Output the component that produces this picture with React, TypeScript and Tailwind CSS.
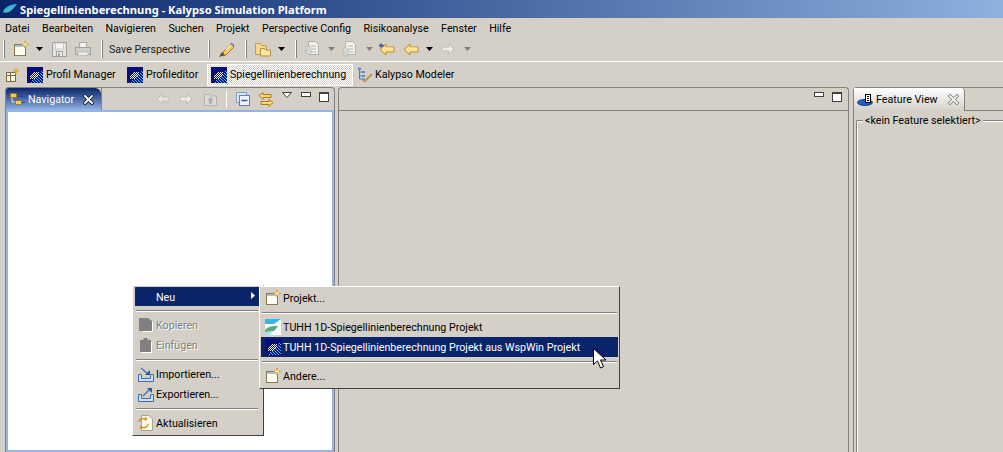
import React from "react";

const font = "font-['Roboto',sans-serif] text-[10.7px] leading-[13px]";

function Grip() {
  return <span className="block w-[2px] h-[18px] bg-white border-r border-[#808080]" />;
}

function Arrow({ off }: { off?: boolean }) {
  return (
    <svg width="7" height="4" viewBox="0 0 7 4" className="block">
      <path d="M0 0h7L3.500 4z" fill={off ? "#808080" : "#000"} />
    </svg>
  );
}

function NewIcon() {
  return (
    <svg width="16" height="16" viewBox="0 0 16 16" className="block shrink-0">
      <rect x="1.500" y="3.500" width="11" height="11" fill="#fffdf0" stroke="#8a7a50" />
      <rect x="2" y="4" width="10" height="2" fill="#a8c0e0" />
      <path d="M12 0v7M8.500 3.500h7" stroke="#d89c18" strokeWidth="1.600" />
      <path d="M12 1.500v4M10 3.500h4" stroke="#fff4b0" />
    </svg>
  );
}

function SaveIcon() {
  return (
    <svg width="15" height="15" viewBox="0 0 15 15" className="block">
      <rect x="0.500" y="0.500" width="14" height="14" fill="#e2e2de" stroke="#a0a09c" />
      <rect x="3.500" y="1" width="8" height="6" fill="#f6f6f4" stroke="#b4b4b0" strokeWidth="0.600" />
      <rect x="4.500" y="9.500" width="6" height="5" fill="#f0f0ec" stroke="#a0a09c" />
      <rect x="6" y="11" width="2" height="3" fill="#a0a09c" />
    </svg>
  );
}

function PrintIcon() {
  return (
    <svg width="16" height="14" viewBox="0 0 16 14" className="block">
      <rect x="4.500" y="0.500" width="7" height="5" fill="#f2f2f0" stroke="#a8a8a4" />
      <rect x="0.500" y="5.500" width="15" height="7" fill="#cfcfcb" stroke="#a0a09c" />
      <rect x="3" y="10" width="10" height="3.500" fill="#ecece8" stroke="#a8a8a4" strokeWidth="0.600" />
    </svg>
  );
}

function PenIcon() {
  return (
    <svg width="17" height="17" viewBox="0 0 17 17" className="block">
      <path d="M5 11L13 3l3 3-8 8-3 1z" fill="#f4c868" stroke="#b07a18" />
      <path d="M8 9l5-5" stroke="#fff0c0" strokeWidth="1.400" />
      <path d="M1 16l3-5 3 3z" fill="#5a4a30" />
      <path d="M13 2l3 3" stroke="#7890b8" strokeWidth="2" />
    </svg>
  );
}

function FolderIcon() {
  return (
    <svg width="16" height="15" viewBox="0 0 16 15" className="block">
      <path d="M0.500 1.500h5l1 2h5v9h-11z" fill="#f4d890" stroke="#c0a050" />
      <path d="M5.500 6.500h4l1 1.500h5v6h-10z" fill="#fbe6a8" stroke="#b89040" />
    </svg>
  );
}

function ImportGrey({ up }: { up?: boolean }) {
  return (
    <svg width="14" height="16" viewBox="0 0 14 16" className="block">
      <path d="M3.500 0.500h7l3 3v10h-10z" fill="#efefeb" stroke="#b0b0ac" />
      <path d="M6 5h5M6 8h5M6 11h5" stroke="#b8b8b4" />
      {up ? (
        <path d="M0 10l3.500-4 3.500 4H5v5H2v-5z" fill="#dcdcd8" stroke="#a8a8a4" strokeWidth="0.600" />
      ) : (
        <path d="M2 5h3v5h2l-3.500 4L0 10h2z" fill="#dcdcd8" stroke="#a8a8a4" strokeWidth="0.600" />
      )}
    </svg>
  );
}

function YellowArrow({ star }: { star?: boolean }) {
  return (
    <svg width="16" height="13" viewBox="0 0 16 13" className="block">
      <path d="M1 6.500L7 1v3h8v5H7v3z" fill="#fbe28a" stroke="#c08a20" />
      <path d="M7 5h7" stroke="#fff6c8" />
      {star && <path d="M2 0v5M0 2.500h5M0.500 1l3 3M3.500 1l-3 3" stroke="#3a5aa8" />}
    </svg>
  );
}

function GreyForward() {
  return (
    <svg width="14" height="12" viewBox="0 0 14 12" className="block">
      <path d="M13 6L8 1v3H1v4h7v3z" fill="#ecece8" stroke="#bcbcb8" />
    </svg>
  );
}

function GreyBack() {
  return (
    <svg width="14" height="12" viewBox="0 0 14 12" className="block">
      <path d="M1 6l5-5v3h7v4H6v3z" fill="#e4e4e0" stroke="#c0c0bc" />
    </svg>
  );
}

function OpenPerspective() {
  return (
    <svg width="13" height="14" viewBox="0 0 13 14" className="block shrink-0">
      <rect x="0.500" y="4.500" width="9" height="9" fill="#fff8e0" stroke="#7a6a40" />
      <path d="M0.500 7.500h9M4.500 4.500v9" stroke="#7a6a40" />
      <path d="M10 0v6M7 3h6" stroke="#e0a820" strokeWidth="1.400" />
    </svg>
  );
}

// dithered diagonal bands on navy, built from single pixels
function WspIcon() {
  const cells: React.ReactNode[] = [];
  for (let y = 0; y < 16; y++) {
    for (let x = 0; x < 16; x++) {
      const s = x + y;
      const fan = y > 4 && y < 12 && x > 2 && x < 12 && s > 10 && s < 19 && s % 2 === 0;
      const band = s > 17 && (x - y + 32) % 3 === 0;
      if (fan) {
        cells.push(<rect key={`${x}-${y}`} x={x} y={y} width="1" height="1" fill="#ffffff" />);
      } else if (band) {
        cells.push(<rect key={`${x}-${y}`} x={x} y={y} width="1" height="1" fill="#48c4fa" />);
      }
    }
  }
  return (
    <svg width="16" height="16" viewBox="0 0 16 16" className="block shrink-0">
      <rect width="16" height="16" fill="#0a0f78" />
      {cells}
    </svg>
  );
}

function ModelerIcon() {
  return (
    <svg width="16" height="16" viewBox="0 0 16 16" className="block shrink-0">
      <path d="M2.500 2v10M2.500 5h3M2.500 9h3M2.500 12h3" stroke="#5878b0" fill="none" />
      <rect x="1" y="0.500" width="3" height="2.500" fill="#6a8cc4" />
      <rect x="5" y="4" width="3" height="2" fill="#6a8cc4" />
      <rect x="5" y="8" width="3" height="2" fill="#6a8cc4" />
      <rect x="5" y="11.500" width="3" height="2" fill="#6a8cc4" />
      <path d="M7 15l8-8" stroke="#c09848" strokeWidth="2" />
    </svg>
  );
}

function NavigatorIcon() {
  return (
    <svg width="15" height="12" viewBox="0 0 15 12" className="block shrink-0">
      <path d="M2 4v5h4" stroke="#d8e4f4" fill="none" />
      <rect x="0.500" y="0.500" width="6" height="4" fill="#f4c860" stroke="#a87820" />
      <rect x="5.500" y="7.500" width="6" height="4" fill="#f4c860" stroke="#a87820" />
      <path d="M8 3.500h7M12 9.500h3" stroke="#2a4a90" />
    </svg>
  );
}

function MinButton() {
  return <span className="block w-[10px] h-[5px] bg-white border border-[#404040]" />;
}

function MaxButton() {
  return <span className="block w-[10px] h-[10px] bg-white border border-[#404040] border-t-2" />;
}

function ViewMenuArrow() {
  return (
    <svg width="10" height="6" viewBox="0 0 10 6" className="block">
      <path d="M0.500 0.500h9L5 5.500z" fill="#fff" stroke="#404040" />
    </svg>
  );
}

function CollapseIcon() {
  return (
    <svg width="14" height="14" viewBox="0 0 14 14" className="block">
      <rect x="0.500" y="0.500" width="10" height="10" fill="#dfe6f2" stroke="#7f9dc8" />
      <rect x="3.500" y="3.500" width="10" height="10" fill="#f0f4fa" stroke="#5a80b8" />
      <path d="M5.500 8.500h6" stroke="#2a5aa0" strokeWidth="1.400" />
    </svg>
  );
}

function LinkIcon() {
  return (
    <svg width="16" height="15" viewBox="0 0 16 15" className="block">
      <path d="M1 3.500l4-3v2h8v3H5v2z" fill="#f8d878" stroke="#b87818" />
      <path d="M15 10.500l-4-3v2H3v3h8v2z" fill="#f8d878" stroke="#b87818" />
    </svg>
  );
}

function HomeGrey() {
  return (
    <svg width="13" height="13" viewBox="0 0 13 13" className="block">
      <path d="M0.500 1.500h5l1 1.500h6v9.500h-12z" fill="#dcdcd8" stroke="#b4b4b0" />
      <path d="M6.500 4l3.500 3.500H8V11H5V7.500H3z" fill="#b0b0ac" />
    </svg>
  );
}

function CloseX({ active }: { active?: boolean }) {
  return (
    <svg width="11" height="11" viewBox="0 0 11 11" className="block shrink-0">
      <path
        d="M2 2l7 7M9 2l-7 7"
        stroke={active ? "#202020" : "#707070"}
        strokeWidth={active ? 3.600 : 3.200}
        strokeLinecap="square"
      />
      <path d="M2 2l7 7M9 2l-7 7" stroke={active ? "#ffffff" : "#f4f4f0"} strokeWidth="1.800" strokeLinecap="square" />
    </svg>
  );
}

function FeatureIcon() {
  return (
    <svg width="16" height="14" viewBox="0 0 16 14" className="block shrink-0">
      <ellipse cx="8" cy="9.500" rx="7.500" ry="3" fill="#1e64c8" stroke="#0a3a8a" />
      <rect x="8.500" y="1.500" width="5" height="8" fill="#fff" stroke="#000" />
      <path d="M10 3.500h2M10 5.500h2M10 7.500h2" stroke="#000" />
    </svg>
  );
}

function CopyIcon() {
  return (
    <svg width="16" height="16" viewBox="0 0 16 16" className="block shrink-0">
      <path d="M1 1h9l4 3v10H1z" fill="#808080" />
      <path d="M14.500 5v9.500H5" stroke="#fff" fill="none" />
    </svg>
  );
}

function PasteIcon() {
  return (
    <svg width="16" height="16" viewBox="0 0 16 16" className="block shrink-0">
      <path d="M2 3h3l1-2h3l1 2h3v12H2z" fill="#808080" />
      <path d="M13.500 5v10.500H3" stroke="#fff" fill="none" />
    </svg>
  );
}

function ImportIcon() {
  return (
    <svg width="16" height="15" viewBox="0 0 16 15" className="block shrink-0">
      <path d="M0.500 7.500h3v4h9v-4h3v7h-15z" fill="#cfe0f4" stroke="#3f6eae" />
      <path d="M3 1l7 6" stroke="#4a78b8" strokeWidth="1.600" />
      <path d="M7 8h5V3z" fill="#245a9c" />
    </svg>
  );
}

function ExportIcon() {
  return (
    <svg width="16" height="15" viewBox="0 0 16 15" className="block shrink-0">
      <path d="M0.500 7.500h3v4h9v-4h3v7h-15z" fill="#cfe0f4" stroke="#3f6eae" />
      <path d="M5 9l6-6" stroke="#4a78b8" strokeWidth="1.600" />
      <path d="M9 1h5v5z" fill="#245a9c" />
    </svg>
  );
}

function RefreshIcon() {
  return (
    <svg width="15" height="16" viewBox="0 0 15 16" className="block shrink-0">
      <path d="M3.500 0.500h7l4 3v12h-11z" fill="#fbf8ea" stroke="#a8a490" />
      <path d="M1 7c0-3 3-4 6-3M7 2.500L8.500 4 7 5.500" stroke="#d09020" strokeWidth="1.400" fill="none" />
      <path d="M10 9c0 3-3 4-6 3.500M4 11l-1.500 1.500L4 14" stroke="#d09020" strokeWidth="1.400" fill="none" />
    </svg>
  );
}

function TuhhIcon() {
  return (
    <svg width="16" height="16" viewBox="0 0 16 16" className="block shrink-0">
      <rect width="16" height="16" fill="#f4fbff" />
      <path d="M0 0h16L9 5H0z" fill="#38b4e8" />
      <path d="M0 11c3-4 9-4 13-4l-4 5-9 1z" fill="#58a878" />
      <path d="M0 13h8l-3 3H0z" fill="#a8dcf4" />
    </svg>
  );
}

function Sep() {
  return <div className="h-[2px] mt-[4px] mb-[3px] mx-[1px] bg-[#808080] border-b border-white" />;
}

function MenuItem({ icon, label, off }: { icon?: React.ReactNode; label: string; off?: boolean }) {
  return (
    <div className="flex items-center h-[20px]">
      <span className="w-[21px] flex justify-center">{icon}</span>
      <span className={off ? "text-[#808080] [text-shadow:1px_1px_0_#fff]" : "text-black"}>{label}</span>
    </div>
  );
}

function ContextMenu() {
  return (
    <div className="absolute left-[132px] top-[285px] w-[132px] h-[151px] bg-[#d4d0c8] border border-t-white border-l-white border-r-[#404040] border-b-[#404040] pt-[1px] pl-[2px] pr-[4px]">
      <div className="flex items-center h-[19px] pt-[1px] bg-[#0a246a] text-white pl-[21px] relative">
        Neu
        <svg width="4" height="7" viewBox="0 0 4 7" className="absolute right-[4px] top-[5px]">
          <path d="M0 0l4 3.500L0 7z" fill="#fff" />
        </svg>
      </div>
      <Sep />
      <MenuItem icon={<CopyIcon />} label="Kopieren" off />
      <MenuItem icon={<PasteIcon />} label="Einfügen" off />
      <Sep />
      <MenuItem icon={<ImportIcon />} label="Importieren..." />
      <MenuItem icon={<ExportIcon />} label="Exportieren..." />
      <Sep />
      <MenuItem icon={<RefreshIcon />} label="Aktualisieren" />
    </div>
  );
}

function SubRow({ icon, label, active }: { icon: React.ReactNode; label: string; active?: boolean }) {
  return (
    <div className={`flex items-center h-[20px] pl-[1px] ${active ? "bg-[#0a246a] text-white" : ""}`}>
      <span className="w-[21px] flex justify-center">{icon}</span>
      {label}
    </div>
  );
}

function SubMenu() {
  return (
    <div className="absolute left-[259px] top-[286px] w-[361px] h-[103px] bg-[#d4d0c8] border border-t-white border-l-white border-r-[#404040] border-b-[#404040] pt-[1px] pl-[1px] pr-[1px]">
      <SubRow icon={<NewIcon />} label="Projekt..." />
      <Sep />
      <SubRow icon={<TuhhIcon />} label="TUHH 1D-Spiegellinienberechnung Projekt" />
      <SubRow icon={<WspIcon />} label="TUHH 1D-Spiegellinienberechnung Projekt aus WspWin Projekt" active />
      <Sep />
      <SubRow icon={<NewIcon />} label="Andere..." />
    </div>
  );
}

function Cursor() {
  return (
    <svg width="15" height="22" viewBox="0 0 15 22" className="absolute left-[593px] top-[348px]">
      <path d="M0.500 0.500v16l4-3.500 3 7 3-1.300-3-6.700h5.500z" fill="#fff" stroke="#000" />
    </svg>
  );
}

export default function App() {
  const menus = ["Datei", "Bearbeiten", "Navigieren", "Suchen", "Projekt", "Perspective Config", "Risikoanalyse", "Fenster", "Hilfe"];

  return (
    <div className={`relative w-[1003px] h-[452px] overflow-hidden bg-[#d4d0c8] text-black ${font}`}>
      <div className="h-[18px] flex items-center gap-[2px] pl-[2px] bg-gradient-to-r from-[#0a246a] to-[#8fb1de] text-white font-bold font-['Noto_Sans',sans-serif] text-[11.2px]">
        <svg width="16" height="12" viewBox="0 0 16 12" className="block shrink-0">
          <path d="M1 9c1-4 7-8 14-8l-5 6c-3 2-6 4-9 2z" fill="#38b4e8" />
          <path d="M3 9c2-2 4-3 7-3L7 9z" fill="#68b888" />
        </svg>
        <span>Spiegellinienberechnung - Kalypso Simulation Platform</span>
      </div>

      <div className="h-[19px] flex items-center gap-[12.4px] pl-[5px] pt-[2px]">
        {menus.map((m) => (
          <span key={m}>{m}</span>
        ))}
      </div>

      <div className="h-[24px] flex items-center pl-[3px]">
        <Grip />
        <span className="ml-[8px]"><NewIcon /></span>
        <span className="ml-[7px]"><Arrow /></span>
        <span className="ml-[9px]"><SaveIcon /></span>
        <span className="ml-[8px]"><PrintIcon /></span>
        <span className="ml-[10px]"><Grip /></span>
        <span className="ml-[6px] w-[83px] whitespace-nowrap text-[#202020]">Save Perspective</span>
        <span className="ml-[16px]"><Grip /></span>
        <span className="ml-[8px]"><PenIcon /></span>
        <span className="ml-[10px]"><Grip /></span>
        <span className="ml-[8px]"><FolderIcon /></span>
        <span className="ml-[7px]"><Arrow /></span>
        <span className="ml-[10px]"><Grip /></span>
        <span className="ml-[8px]"><ImportGrey /></span>
        <span className="ml-[9px]"><Arrow off /></span>
        <span className="ml-[7px]"><ImportGrey up /></span>
        <span className="ml-[10px]"><Arrow off /></span>
        <span className="ml-[6px]"><YellowArrow star /></span>
        <span className="ml-[8px]"><YellowArrow /></span>
        <span className="ml-[7px]"><Arrow /></span>
        <span className="ml-[8px]"><GreyForward /></span>
        <span className="ml-[9px]"><Arrow off /></span>
      </div>

      <div className="h-[26px] flex items-center pl-[6px] border-t border-white">
        <OpenPerspective />
        <span className="ml-[8px]"><WspIcon /></span>
        <span className="ml-[3px] w-[69px] whitespace-nowrap">Profil Manager</span>
        <span className="ml-[12px]"><WspIcon /></span>
        <span className="ml-[3px] w-[52px] whitespace-nowrap">Profileditor</span>
        <span className="ml-[9px] h-[22px] flex items-center pl-[3px] pr-[7px] border border-white bg-[repeating-conic-gradient(#ffffff_0_25%,#d4d0c8_0_50%)] bg-[length:2px_2px]">
          <WspIcon />
          <span className="ml-[3px] w-[115px] whitespace-nowrap">Spiegellinienberechnung</span>
        </span>
        <span className="ml-[4px]"><ModelerIcon /></span>
        <span className="ml-[2px]">Kalypso Modeler</span>
      </div>

      <div className="h-[365px] flex pl-[5px]">
        <section className="w-[330px] flex flex-col">
          <div className="h-[23px] flex border border-b-0 border-[#808080] rounded-t-[4px] overflow-hidden">
            <div className="w-[95px] flex items-center pl-[4px] bg-gradient-to-b from-[#0a246a] to-[#93b4e4] text-white rounded-tr-[6px]">
              <NavigatorIcon />
              <span className="ml-[3px] w-[51px]">Navigator</span>
              <span className="ml-[4px]"><CloseX active /></span>
            </div>
            <div className="flex-1 flex items-center pl-[54px] border-l border-[#808080]">
              <GreyBack />
              <span className="ml-[9px]"><GreyForward /></span>
              <span className="ml-[11px]"><HomeGrey /></span>
              <span className="ml-[9px] block w-[1px] h-[17px] bg-white" />
              <span className="ml-[9px]"><CollapseIcon /></span>
              <span className="ml-[8px]"><LinkIcon /></span>
              <span className="ml-[8px] self-start mt-[4px]"><ViewMenuArrow /></span>
              <span className="ml-[9px] self-start mt-[4px]"><MinButton /></span>
              <span className="ml-[8px] self-start mt-[4px]"><MaxButton /></span>
            </div>
          </div>
          <div className="flex-1 border-x border-[#808080]">
            <div className="h-full bg-white border-2 border-[#93b4e4]" />
          </div>
        </section>

        <section className="ml-[3px] w-[511px] flex flex-col border border-[#808080] border-b-0 rounded-t-[4px]">
          <div className="h-[23px] flex items-start justify-end gap-[8px] pt-[4px] pr-[6px] border-b border-[#808080]">
            <MinButton />
            <MaxButton />
          </div>
        </section>

        <section className="ml-[4px] flex-1 flex flex-col">
          <div className="h-[24px] flex border-t border-l border-[#808080] rounded-tl-[4px]">
            <div className="w-[111px] flex items-center pl-[3px] bg-gradient-to-b from-white to-[#d4d0c8] border-r border-[#808080] rounded-tr-[4px]">
              <FeatureIcon />
              <span className="ml-[3px] w-[63px] whitespace-nowrap">Feature View</span>
              <span className="ml-[9px]"><CloseX /></span>
            </div>
            <div className="flex-1 border-b border-[#808080]" />
          </div>
          <div className="flex-1 border-l border-[#808080] pl-[2px] pt-[3px]">
            <fieldset className="h-full border border-r-0 border-b-0 border-[#808080] rounded-tl-[2px] pl-[6px] shadow-[inset_1px_1px_0_#ffffff]">
              <legend className="px-[2px] bg-[#d4d0c8] whitespace-nowrap">&lt;kein Feature selektiert&gt;</legend>
            </fieldset>
          </div>
        </section>
      </div>

      <ContextMenu />
      <SubMenu />
      <Cursor />
    </div>
  );
}
